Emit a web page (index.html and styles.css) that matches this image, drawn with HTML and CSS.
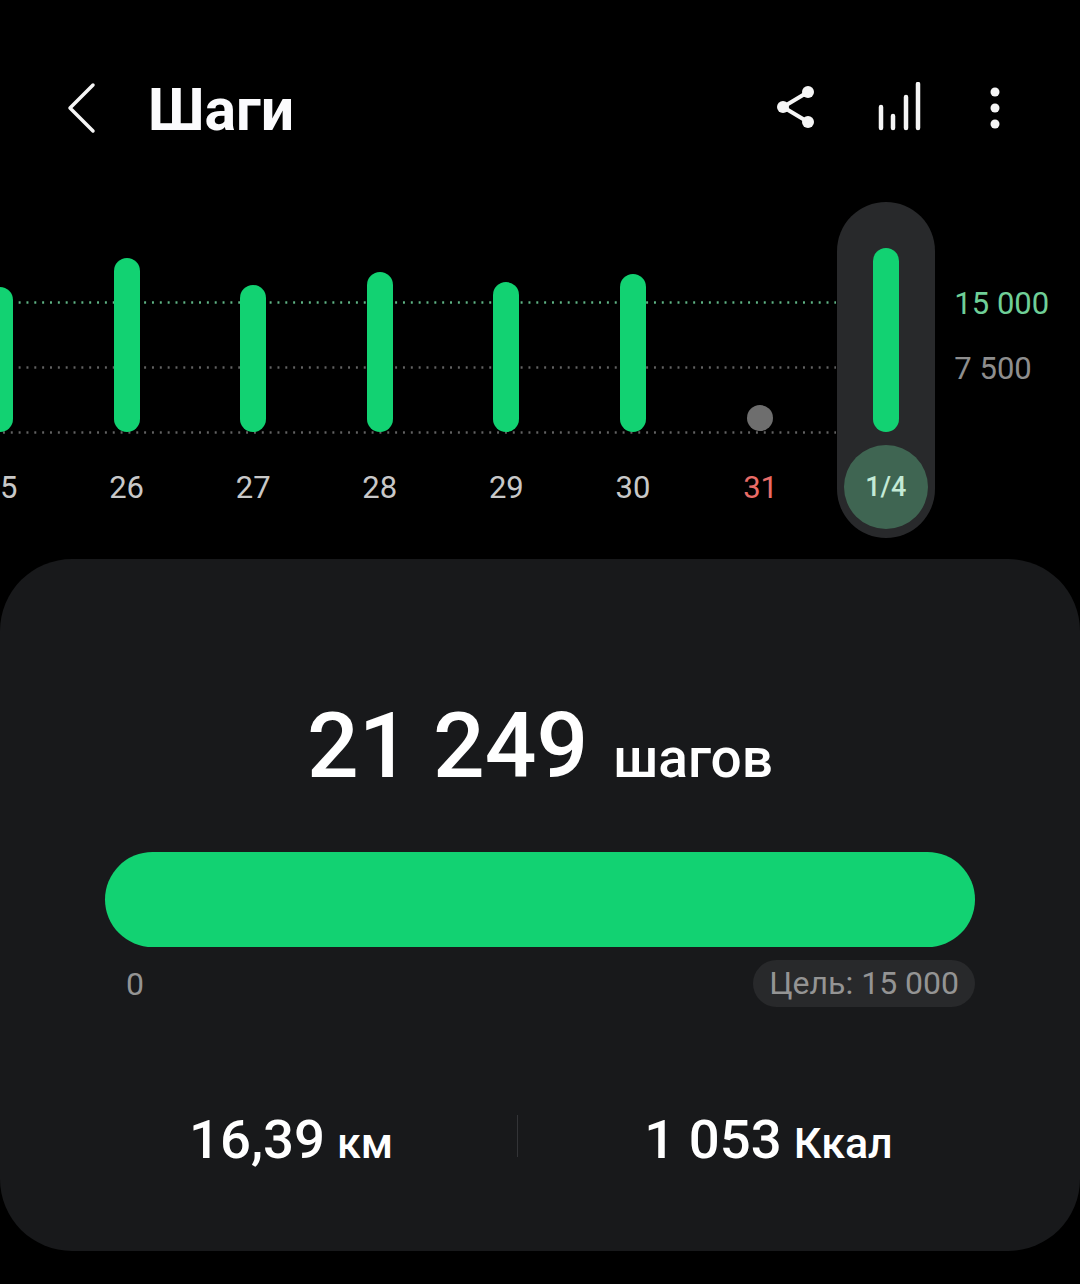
FILE: index.html
```html
<!DOCTYPE html>
<html lang="ru">
<head>
  <meta charset="UTF-8">
  <title>Шаги</title>
  <meta name="viewport" content="width=device-width, initial-scale=1.0">
  <link rel="stylesheet" href="styles.css">
</head>
<body>
  <header class="topbar">
    <svg class="back-icon" width="32" height="52" viewBox="0 0 32 52">
      <path d="M27 3 L4 26 L27 49" />
    </svg>
    <h1>Шаги</h1>
    <div class="actions">
      <svg class="share-icon" width="40" height="46" viewBox="0 0 40 46">
        <path d="M32 8 L7 23 L32 38" />
        <circle cx="32" cy="8" r="6" />
        <circle cx="7" cy="23" r="6" />
        <circle cx="32" cy="38" r="6" />
      </svg>
      <svg class="stats-icon" width="46" height="50" viewBox="0 0 46 50">
        <path d="M4 25 V46 M16 34 V46 M29 15 V46 M41 2 V46" />
      </svg>
      <svg class="more-icon" width="10" height="44" viewBox="0 0 10 44">
        <circle cx="5" cy="6" r="4.5" />
        <circle cx="5" cy="22" r="4.5" />
        <circle cx="5" cy="38" r="4.5" />
      </svg>
    </div>
  </header>

  <section class="chart">
    <div class="gridline goal"></div>
    <div class="gridline half"></div>
    <div class="gridline zero"></div>

    <div class="days">
      <div class="day"><div class="slot"><div class="bar" style="height: 145px"></div></div><span>25</span></div>
      <div class="day"><div class="slot"><div class="bar" style="height: 174px"></div></div><span>26</span></div>
      <div class="day"><div class="slot"><div class="bar" style="height: 147px"></div></div><span>27</span></div>
      <div class="day"><div class="slot"><div class="bar" style="height: 160px"></div></div><span>28</span></div>
      <div class="day"><div class="slot"><div class="bar" style="height: 150px"></div></div><span>29</span></div>
      <div class="day"><div class="slot"><div class="bar" style="height: 158px"></div></div><span>30</span></div>
      <div class="day"><div class="slot"><div class="dot"></div></div><span class="sunday">31</span></div>
      <div class="today">
        <div class="bar" style="height: 184px"></div>
        <div class="today-label">1/4</div>
      </div>
      <div class="axis">
        <span class="axis-goal">15 000</span>
        <span>7 500</span>
      </div>
    </div>
  </section>

  <section class="card">
    <div class="total"><b>21 249</b> <span>шагов</span></div>
    <div class="progress"></div>
    <div class="progress-labels">
      <span class="zero-label">0</span>
      <span class="goal-pill">Цель: 15 000</span>
    </div>
    <div class="stats">
      <div class="stat distance"><b>16,39</b> <span>км</span></div>
      <div class="stat calories"><b>1 053</b> <span>Ккал</span></div>
    </div>
  </section>
</body>
</html>
```

FILE: styles.css
```css
* {
  box-sizing: border-box;
}

body {
  font-family: Roboto, "Noto Sans", sans-serif;
  background-color: #000;
  color: #fff;
  margin: 0;
  padding: 0;
  height: 1284px;
  overflow: hidden;
}

.topbar {
  height: 202px;
  display: flex;
  align-items: flex-start;
  padding: 82px 0 0 66px;
}

.topbar h1 {
  font-size: 59px;
  font-weight: 700;
  line-height: 56px;
  margin: 0 0 0 50px;
  color: #fbfbfd;
}

.back-icon path {
  fill: none;
  stroke: #f5f5f5;
  stroke-width: 3.5;
  stroke-linecap: round;
  stroke-linejoin: round;
}

.actions {
  margin-left: auto;
  display: flex;
  align-items: flex-start;
  padding-right: 80px;
}

.share-icon {
  margin-top: 2px;
}

.share-icon path {
  fill: none;
  stroke: #f5f5f5;
  stroke-width: 4;
}

.share-icon circle,
.more-icon circle {
  fill: #f5f5f5;
}

.stats-icon {
  margin-left: 61px;
}

.stats-icon path {
  fill: none;
  stroke: #f5f5f5;
  stroke-width: 4.5;
  stroke-linecap: round;
}

.more-icon {
  margin: 4px 0 0 67px;
}

.chart {
  position: relative;
  height: 357px;
  overflow: hidden;
}

.gridline {
  position: absolute;
  left: 0;
  width: 836px;
  height: 3px;
  background-image: radial-gradient(circle, currentColor 1px, transparent 1.4px);
  background-size: 7.85px 3px;
}

.gridline.goal { top: 99px; color: #5fb585; }
.gridline.half { top: 164px; color: #626262; }
.gridline.zero { top: 229px; color: #626262; }

.days {
  position: relative;
  display: flex;
  margin-left: -63.3px;
}

.day {
  width: 126.6px;
  flex: none;
  display: flex;
  flex-direction: column;
  align-items: center;
}

.slot {
  height: 230px;
  display: flex;
  align-items: flex-end;
}

.bar {
  width: 26px;
  background: #12d272;
  border-radius: 13px;
}

.dot {
  width: 26px;
  height: 26px;
  margin-bottom: 1px;
  border-radius: 50%;
  background: #6e6e6e;
}

.day span {
  margin-top: 38px;
  font-size: 31px;
  line-height: 36px;
  color: #c8c8c8;
}

.day .sunday {
  color: #e96c67;
  margin-left: 2px;
}

.today {
  flex: none;
  width: 98px;
  height: 336px;
  margin-left: 14px;
  padding-top: 46px;
  border-radius: 49px;
  background: #28292b;
  display: flex;
  flex-direction: column;
  align-items: center;
}

.today-label {
  width: 84px;
  height: 84px;
  margin-top: 13px;
  border-radius: 50%;
  background: #3f6552;
  color: #c4ead6;
  font-size: 27px;
  font-weight: 500;
  line-height: 84px;
  text-align: center;
}

.axis {
  flex: none;
  display: flex;
  flex-direction: column;
  gap: 29px;
  margin-left: 19.5px;
  padding-top: 84px;
  font-size: 31px;
  line-height: 36px;
  color: #8e8e8e;
}

.axis-goal {
  color: #6fcf97;
}

.card {
  height: 692px;
  background: #18191b;
  border-radius: 72px;
  padding: 137px 105px 0;
}

.total {
  text-align: center;
  height: 156px;
  line-height: 100px;
  white-space: nowrap;
}

.total b {
  font-size: 91px;
  font-weight: 500;
}

.total span {
  margin-left: 21px;
  font-size: 55px;
  font-weight: 500;
}

.progress {
  height: 95px;
  border-radius: 48px;
  background: #12d272;
}

.progress-labels {
  display: flex;
  justify-content: space-between;
  align-items: center;
  margin-top: 13px;
  font-size: 32px;
  color: #949494;
}

.zero-label {
  margin-left: 21px;
}

.goal-pill {
  height: 47px;
  line-height: 47px;
  padding: 0 16px;
  border-radius: 24px;
  background: #28292b;
}

.stats {
  display: flex;
  margin: 108px -105px 0;
  padding: 0 61px 0 65px;
  height: 42px;
}

.stat {
  flex: none;
  text-align: center;
  line-height: 48px;
  white-space: nowrap;
}

.stat.distance {
  width: 452px;
}

.stat.calories {
  width: 502px;
  border-left: 1px solid #333437;
}

.stat b {
  font-size: 54.5px;
  font-weight: 500;
}

.stat span {
  margin-left: 8px;
  font-size: 43px;
  font-weight: 500;
}
```
